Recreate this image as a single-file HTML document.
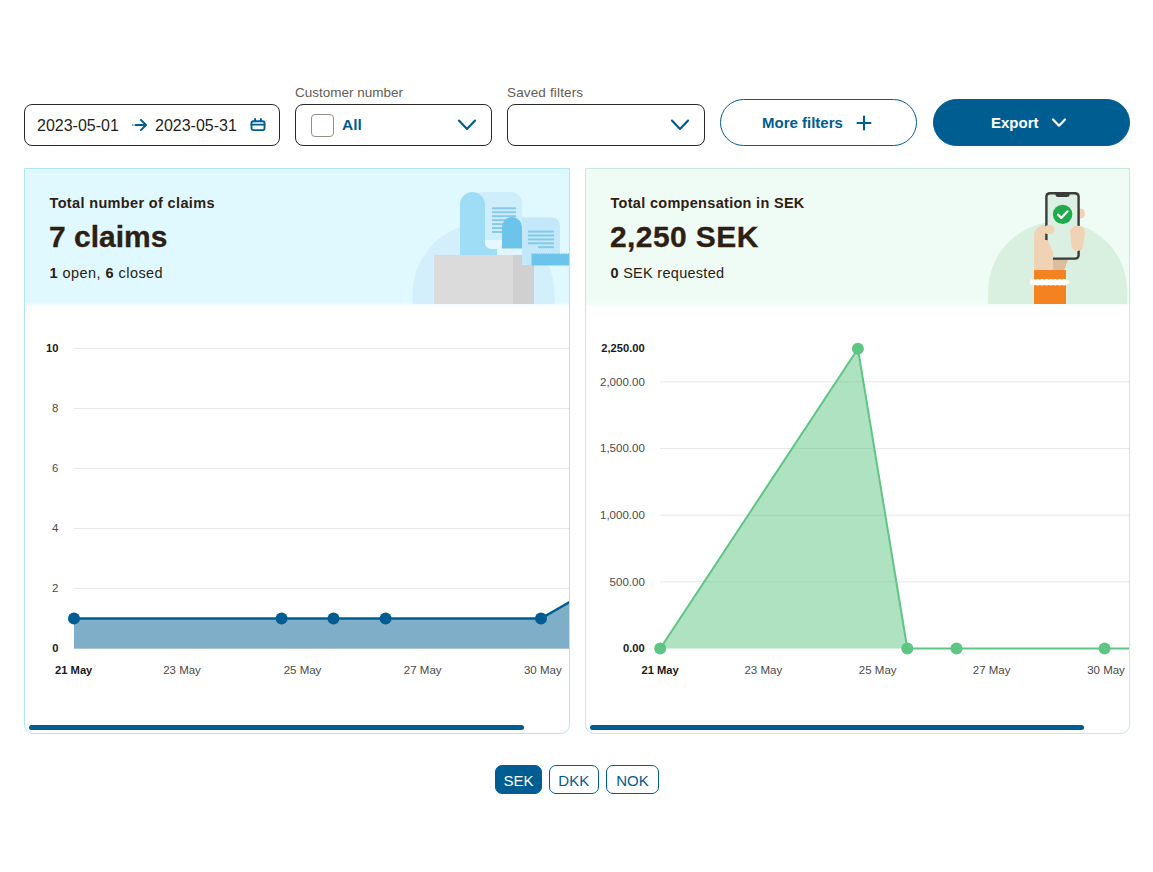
<!DOCTYPE html>
<html lang="en">
<head>
<meta charset="utf-8">
<title>Claims overview</title>
<style>
*{box-sizing:border-box;margin:0;padding:0}
html,body{width:1153px;height:872px;background:#fff;overflow:hidden}
body{position:relative;font-family:"Liberation Sans",sans-serif;color:#2d2013}
.abs{position:absolute}
.field{position:absolute;top:104px;height:42px;border:1px solid #2b2724;border-radius:8px;background:#fff}
.lbl{position:absolute;top:85px;font-size:13.5px;color:#645c53;white-space:nowrap;line-height:16px}
.date{position:absolute;top:0.5px;height:40px;line-height:40px;font-size:16px;color:#1e1e1e;white-space:nowrap}
.btn{position:absolute;top:99px;height:47px;border-radius:24px;border:1px solid #005d92;white-space:nowrap}
.btn span{position:absolute;top:0;line-height:45px;font-size:15px;font-weight:bold}
.card{position:absolute;top:168px;height:566px;border:1px solid #b1e4f3;border-radius:0 0 9px 9px;background:#fff;overflow:hidden}
.hdr{position:absolute;left:0;top:0;right:0;height:138px}
.t1{position:absolute;left:24.5px;top:25px;font-size:14.5px;font-weight:bold;line-height:18px;white-space:nowrap;color:#2d2013;letter-spacing:.35px}
.t2{position:absolute;left:24px;top:49.5px;font-size:30px;font-weight:bold;-webkit-text-stroke:.3px #2d2013;line-height:36px;white-space:nowrap;color:#2d2013}
.t3{position:absolute;left:24.5px;top:94.5px;font-size:14.5px;line-height:18px;white-space:nowrap;color:#2d2013;letter-spacing:.45px}
.sb{position:absolute;top:556px;height:5px;border-radius:3px;background:#005d92}
svg{position:absolute;left:0;top:0;overflow:visible}
svg text{font-family:"Liberation Sans",sans-serif;font-size:11.5px;fill:#4a4a4a}
svg text.b{font-weight:bold;fill:#1a1a1a;font-size:11.2px}
.cur{position:absolute;top:765px;height:29px;border:1px solid #005d92;border-radius:7px;font-size:15px;line-height:27px;padding-top:.5px;text-align:center;color:#005d92;background:#fff}
.cur.on{background:#005d92;color:#fff}
</style>
</head>
<body>

<!-- date range -->
<div class="field" style="left:24px;width:256px">
  <span class="date" style="left:12px">2023-05-01</span>
  <svg width="18" height="14" viewBox="0 0 18 14" style="left:107px;top:13.3px"><circle cx="0.9" cy="7" r="0.75" fill="#005d92"/><path d="M3.5 7H14M8.9 1.9L14 7l-5.1 5.1" fill="none" stroke="#005d92" stroke-width="2" stroke-linecap="round" stroke-linejoin="round"/></svg>
  <span class="date" style="left:130px">2023-05-31</span>
  <svg width="16" height="16" viewBox="0 0 16 16" style="left:225px;top:12px"><rect x="1.5" y="4.3" width="13" height="8.8" rx="1.8" fill="none" stroke="#005d92" stroke-width="1.9"/><path d="M1.5 7.6h13M5.1 1.9v2.4M10.9 1.9v2.4" stroke="#005d92" stroke-width="1.9" stroke-linecap="round"/></svg>
</div>

<!-- customer number -->
<div class="lbl" style="left:295px">Customer number</div>
<div class="field" style="left:295px;width:197px">
  <div class="abs" style="left:15px;top:9px;width:23px;height:23px;border:1px solid #969087;border-radius:4px;background:#fff"></div>
  <span class="abs" style="left:46px;top:0;line-height:40px;font-size:15.5px;font-weight:bold;color:#005d92">All</span>
  <svg width="20" height="12" viewBox="0 0 20 12" style="left:161px;top:14.2px"><path d="M1.95 1.6L10 9.9l8.05-8.3" fill="none" stroke="#005d92" stroke-width="2.2" stroke-linecap="round" stroke-linejoin="round"/></svg>
</div>

<!-- saved filters -->
<div class="lbl" style="left:507px;letter-spacing:.15px">Saved filters</div>
<div class="field" style="left:507px;width:198px">
  <svg width="20" height="12" viewBox="0 0 20 12" style="left:161.9px;top:14.2px"><path d="M1.95 1.6L10 9.9l8.05-8.3" fill="none" stroke="#005d92" stroke-width="2.2" stroke-linecap="round" stroke-linejoin="round"/></svg>
</div>

<!-- buttons -->
<div class="btn" style="left:720px;width:197px;background:#fff;color:#005d92">
  <span style="left:41px">More filters</span>
  <svg width="16" height="16" viewBox="0 0 16 16" style="left:134.7px;top:14.5px"><path d="M8 1.5v13M1.5 8h13" stroke="#005d92" stroke-width="2.1" stroke-linecap="round"/></svg>
</div>
<div class="btn" style="left:933px;width:197px;background:#005d92;color:#fff">
  <span style="left:57px">Export</span>
  <svg width="16" height="10" viewBox="0 0 16 10" style="left:117.4px;top:18.1px"><path d="M2 1.5L8 7.7l6-6.2" fill="none" stroke="#fff" stroke-width="2.2" stroke-linecap="round" stroke-linejoin="round"/></svg>
</div>

<!-- LEFT CARD -->
<div class="card" id="c1" style="left:24px;width:546px">
  <div class="hdr" style="background:linear-gradient(#e0f8ff 0,#e0f8ff 133px,#fff 138px)"></div>
  <div class="t1">Total number of claims</div>
  <div class="t2">7 claims</div>
  <div class="t3"><b>1</b> open, <b>6</b> closed</div>
  <svg id="s1" width="546" height="566">
<g transform="translate(-25,-169)">
<clipPath id="k1"><rect x="25" y="169" width="544" height="135"/></clipPath><g clip-path="url(#k1)">
<path d="M412.5 305V294a71 71 0 0 1 142 0v11z" fill="#d3effc"/>
<rect x="472" y="192" width="50" height="58" rx="11" fill="#cfeefc"/>
<path d="M485 240v3a8.5 8.5 0 0 0 17 0v-3z" fill="#e6f7fe"/>
<rect x="496" y="248" width="26" height="8" fill="#e4f6fd"/>
<path d="M460 256V204.5a12.5 12.5 0 0 1 25 0V243a6 6 0 0 0 6 6h6v7z" fill="#9fdcf5"/>
<rect x="492" y="207.3" width="24" height="2" fill="#86c9ea"/>
<rect x="492" y="211.25" width="24" height="2" fill="#86c9ea"/>
<rect x="492" y="215.2" width="24" height="2" fill="#86c9ea"/>
<rect x="492" y="219.15" width="24" height="2" fill="#86c9ea"/>
<rect x="492" y="223.1" width="24" height="2" fill="#86c9ea"/>
<rect x="492" y="227.05" width="24" height="2" fill="#86c9ea"/>
<rect x="492" y="231" width="24" height="2" fill="#86c9ea"/>
<rect x="434" y="255" width="79" height="50" fill="#dcdbdb"/>
<rect x="513" y="255" width="21" height="50" fill="#d1d0d0"/>
<path d="M522 217.5h30a8 8 0 0 1 8 8V265H522z" fill="#c2e8fa"/>
<path d="M502 248.5V227a10 10 0 0 1 20 0v21.5z" fill="#6cc4ea"/>
<rect x="528" y="230.6" width="26" height="2" fill="#86c9ea"/>
<rect x="528" y="234.5" width="26" height="2" fill="#86c9ea"/>
<rect x="528" y="238.4" width="26" height="2" fill="#86c9ea"/>
<rect x="528" y="242.3" width="26" height="2" fill="#86c9ea"/>
<rect x="538" y="246.2" width="16" height="2" fill="#86c9ea"/>
<path d="M531.5 265.6V254.2L532.4 253L533.3 254.2L534.2 253L535.1 254.2L536 253L536.9 254.2L537.8 253L538.7 254.2L539.6 253L540.5 254.2L541.4 253L542.3 254.2L543.2 253L544.1 254.2L545 253L545.9 254.2L546.8 253L547.7 254.2L548.6 253L549.5 254.2L550.4 253L551.3 254.2L552.2 253L553.1 254.2L554 253L554.9 254.2L555.8 253L556.7 254.2L557.6 253L558.5 254.2L559.4 253L560.3 254.2L561.2 253L562.1 254.2L563 253L563.9 254.2L564.8 253L565.7 254.2L566.6 253L567.5 254.2L568.4 253L569.3 254.2L570.2 253L571.1 254.2V265.6z" fill="#6cc4ea"/>
</g>
<path d="M74 348.5H570" stroke="#e7e7e7" stroke-width="1"/><path d="M74 408.5H570" stroke="#e7e7e7" stroke-width="1"/><path d="M74 468.5H570" stroke="#e7e7e7" stroke-width="1"/><path d="M74 528.5H570" stroke="#e7e7e7" stroke-width="1"/><path d="M74 588.5H570" stroke="#e7e7e7" stroke-width="1"/><path d="M74 648.5H570" stroke="#e7e7e7" stroke-width="1"/>
<path d="M74 618.5 L281.6 618.5 L333.5 618.5 L385.6 618.5 L541 618.5 L593 588.5 V648.5H74z" fill="#005d92" fill-opacity=".5"/>
<path d="M74 618.5 L281.6 618.5 L333.5 618.5 L385.6 618.5 L541 618.5 L593 588.5" fill="none" stroke="#005d92" stroke-width="2.5" stroke-linejoin="round"/>
<circle cx="74" cy="618.5" r="6" fill="#005d92"/>
<circle cx="281.6" cy="618.5" r="6" fill="#005d92"/>
<circle cx="333.5" cy="618.5" r="6" fill="#005d92"/>
<circle cx="385.6" cy="618.5" r="6" fill="#005d92"/>
<circle cx="541" cy="618.5" r="6" fill="#005d92"/>
<text x="58.5" y="352.2" text-anchor="end" class="b">10</text>
<text x="58.5" y="412.2" text-anchor="end">8</text>
<text x="58.5" y="472.2" text-anchor="end">6</text>
<text x="58.5" y="532.2" text-anchor="end">4</text>
<text x="58.5" y="592.2" text-anchor="end">2</text>
<text x="58.5" y="652.2" text-anchor="end" class="b">0</text>
<text x="73.7" y="674.3" text-anchor="middle" class="b">21 May</text>
<text x="182" y="674.3" text-anchor="middle">23 May</text>
<text x="302.5" y="674.3" text-anchor="middle">25 May</text>
<text x="422.7" y="674.3" text-anchor="middle">27 May</text>
<text x="542.8" y="674.3" text-anchor="middle">30 May</text>
</g>
</svg>
  <div class="sb" style="left:4px;width:495px"></div>
</div>

<!-- RIGHT CARD -->
<div class="card" id="c2" style="left:585px;width:545px;border-color:#c8e8d9">
  <div class="hdr" style="background:linear-gradient(#effbf5 0,#effbf5 133px,#fff 138px)"></div>
  <div class="t1" style="letter-spacing:.3px">Total compensation in SEK</div>
  <div class="t2" style="letter-spacing:.4px">2,250 SEK</div>
  <div class="t3" style="letter-spacing:.28px"><b>0</b> SEK requested</div>
  <svg id="s2" width="545" height="566">
<g transform="translate(-586,-169)">
<clipPath id="k2"><rect x="586" y="169" width="543" height="135"/></clipPath><g clip-path="url(#k2)">
<path d="M988.2 305V291.2a69.5 69.5 0 0 1 139 0V305z" fill="#d9efe0"/>
<rect x="1074" y="208.5" width="11" height="10" rx="4.5" fill="#f0d3b5"/>
<path d="M1049 257h20l-5 14h-15z" fill="#dcbd9c"/>
<path d="M1034 270V236a11 11 0 0 1 11-11h8v45z" fill="#f0d3b5"/>
<rect x="1045.2" y="192" width="34.6" height="67.8" rx="4.5" fill="#3b3b3b"/>
<rect x="1047.6" y="194.4" width="29.8" height="63" rx="2.5" fill="#dcefe3"/>
<path d="M1055.5 194h14v0.5a2.5 2.5 0 0 1-2.5 2.5h-9a2.5 2.5 0 0 1-2.5-2.5z" fill="#3b3b3b"/>
<circle cx="1062.6" cy="214.4" r="9.7" fill="#1faa4b"/>
<path d="M1058 214.6l3.3 3.3 6.2-6.6" fill="none" stroke="#fff" stroke-width="2.2" stroke-linecap="round" stroke-linejoin="round"/>
<path d="M1044 232a5 5 0 0 1 5-7h1a4.5 4.5 0 0 1 0 9h-4z" fill="#f0d3b5"/>
<path d="M1040 240h7.5l5.5 12v18h-13z" fill="#f0d3b5"/>
<path d="M1070 232.5a6.8 6.8 0 0 1 6.8-6.8h1.6a6.8 6.8 0 0 1 6.7 7.6l-1.8 12.5a6 6 0 0 1-11.9-.300z" fill="#f0d3b5"/>
<rect x="1034" y="270" width="32" height="35" fill="#f58220"/>
<path d="M1033.2 282.3H1067.5" stroke="#fff" stroke-width="6.4" stroke-linecap="round" stroke-dasharray="0.1 4.3"/>
<path d="M1032.5 282.3H1067.2" stroke="#fff" stroke-width="4.2" stroke-linecap="round"/>
</g>
<path d="M660 381.83H1130" stroke="#e7e7e7" stroke-width="1"/><path d="M660 448.5H1130" stroke="#e7e7e7" stroke-width="1"/><path d="M660 515.17H1130" stroke="#e7e7e7" stroke-width="1"/><path d="M660 581.83H1130" stroke="#e7e7e7" stroke-width="1"/>
<path d="M660.2 648.5 L857.9 348.7 L907.3 648.5 L956.5 648.5 L1104.6 648.5 L1154 648.5z" fill="#5ec584" fill-opacity=".5"/>
<path d="M660.2 648.5 L857.9 348.7 L907.3 648.5 L956.5 648.5 L1104.6 648.5 L1154 648.5" fill="none" stroke="#5ec584" stroke-width="2" stroke-linejoin="round"/>
<circle cx="660.2" cy="648.5" r="6" fill="#5ec584"/>
<circle cx="857.9" cy="348.7" r="6" fill="#5ec584"/>
<circle cx="907.3" cy="648.5" r="6" fill="#5ec584"/>
<circle cx="956.5" cy="648.5" r="6" fill="#5ec584"/>
<circle cx="1104.6" cy="648.5" r="6" fill="#5ec584"/>
<text x="644.8" y="352.2" text-anchor="end" class="b">2,250.00</text>
<text x="644.8" y="385.5" text-anchor="end">2,000.00</text>
<text x="644.8" y="452.2" text-anchor="end">1,500.00</text>
<text x="644.8" y="518.9" text-anchor="end">1,000.00</text>
<text x="644.8" y="585.5" text-anchor="end">500.00</text>
<text x="644.8" y="652.2" text-anchor="end" class="b">0.00</text>
<text x="660.1" y="674.3" text-anchor="middle" class="b">21 May</text>
<text x="763.3" y="674.3" text-anchor="middle">23 May</text>
<text x="877.7" y="674.3" text-anchor="middle">25 May</text>
<text x="991.6" y="674.3" text-anchor="middle">27 May</text>
<text x="1106" y="674.3" text-anchor="middle">30 May</text>
</g>
</svg>
  <div class="sb" style="left:3.5px;width:494.5px"></div>
</div>

<!-- currency -->
<div class="cur on" style="left:495px;width:47px">SEK</div>
<div class="cur" style="left:549px;width:49.5px">DKK</div>
<div class="cur" style="left:606px;width:53px">NOK</div>

</body>
</html>
